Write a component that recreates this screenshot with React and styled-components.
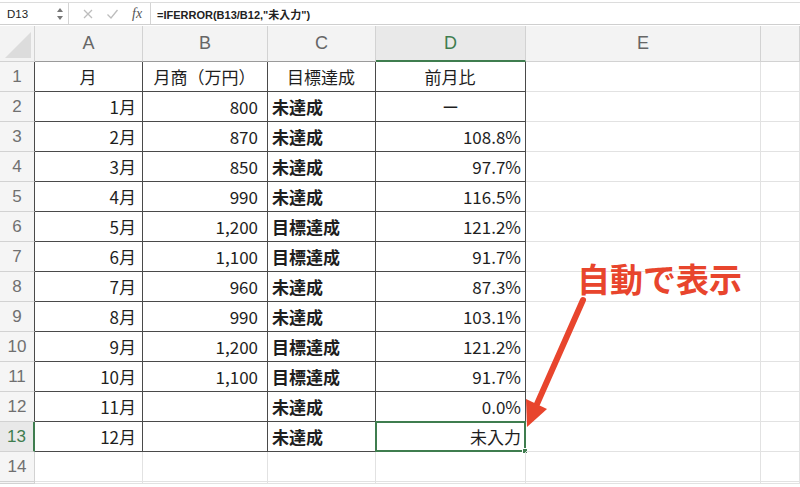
import React from 'react'
import styled, { createGlobalStyle } from 'styled-components'

const GlobalStyle = createGlobalStyle`
  html, body {
    margin: 0;
    padding: 0;
    background: #ffffff;
    overflow: hidden;
  }
  * { box-sizing: border-box; }
`

const green = '#3f7d4f'
const dark = '#4a4a4a'
const light = '#e2e2e2'
const headLine = '#d2d2d2'
const cjk = `"Noto Sans CJK JP", "Noto Sans", sans-serif`

const Page = styled.div`
  position: relative;
  width: 800px;
  height: 487px;
  overflow: hidden;
  font-family: ${cjk};
  color: #1a1a1a;
`

const FormulaBar = styled.div`
  margin-top: 2px;
  height: 23px;
  border-top: 1px solid #dcdcdc;
  border-bottom: 1px solid #cfcfcf;
  display: flex;
  align-items: center;
  background: #fff;
`

const NameBox = styled.div`
  width: 69px;
  height: 100%;
  display: flex;
  align-items: center;
  justify-content: space-between;
  padding: 0 4px 0 7px;
  border-right: 1px solid #d4d4d4;
  font-family: "Liberation Sans", Arial, sans-serif;
  font-size: 11.5px;
  color: #222;
`

const BarIcons = styled.div`
  width: 82px;
  height: 100%;
  display: flex;
  align-items: center;
  gap: 12px;
  padding-left: 13px;
  border-right: 1px solid #d4d4d4;
`

const Fx = styled.span`
  font-family: "Liberation Serif", "Times New Roman", serif;
  font-style: italic;
  font-size: 14px;
  color: #555;
  margin-left: 1px;
`

const FormulaText = styled.div`
  padding-left: 6px;
  font-family: "Liberation Sans", ${cjk};
  font-size: 11px;
  font-weight: 700;
  color: #222;
`

const Sheet = styled.div`
  margin-top: 1px;
  display: grid;
  grid-template-columns: 35px 108px 125px 108px 150px 235px 1fr;
  grid-template-rows: 36px repeat(14, 30px);
`

const ColHead = styled.div`
  background: ${p => (p.$active ? '#e9e9e9' : '#f3f3f3')};
  border-right: 1px solid ${headLine};
  border-bottom: 1px solid ${p => (p.$active ? green : p.$tabled ? '#9a9a9a' : headLine)};
  ${p => p.$active && `border-bottom-width: 2px;`}
  display: flex;
  align-items: center;
  justify-content: center;
  font-family: "Liberation Sans", Arial, sans-serif;
  font-size: 18px;
  color: ${p => (p.$active ? green : '#666')};
`

const Corner = styled(ColHead)`
  position: relative;
  overflow: hidden;
`

const RowHead = styled.div`
  background: ${p => (p.$active ? '#e9e9e9' : '#f5f5f5')};
  border-right: 1px solid ${p => (p.$active ? green : p.$tabled ? dark : headLine)};
  ${p => p.$active && `border-right-width: 2px;`}
  border-bottom: 1px solid ${headLine};
  display: flex;
  align-items: center;
  justify-content: center;
  font-family: "Liberation Sans", Arial, sans-serif;
  font-size: 17px;
  color: ${p => (p.$active ? green : '#707070')};
`

const Cell = styled.div`
  position: relative;
  border-right: 1px solid ${p => (p.$tabled ? dark : light)};
  border-bottom: 1px solid ${p => (p.$tabled ? dark : light)};
  display: flex;
  align-items: center;
  justify-content: ${p => p.$align || 'flex-end'};
  padding: 0 ${p => p.$pad ?? 5}px 1px 4px;
  font-size: 17px;
  font-weight: ${p => (p.$bold ? 700 : 400)};
  color: #1e1e1e;
  white-space: nowrap;
`

const Selection = styled.div`
  position: absolute;
  left: -1px;
  top: -1px;
  right: -1px;
  bottom: -1px;
  border: 2px solid ${green};
  pointer-events: none;
`

const FillHandle = styled.div`
  position: absolute;
  right: -4px;
  bottom: -4px;
  width: 6px;
  height: 6px;
  background: ${green};
  border: 1px solid #fff;
`

const Callout = styled.div`
  position: absolute;
  left: 577px;
  top: 254px;
  font-size: 33px;
  font-weight: 700;
  color: #e8452d;
  white-space: nowrap;
`

const ArrowLayer = styled.svg`
  position: absolute;
  left: 0;
  top: 0;
  pointer-events: none;
`

const data = [
  ['1月', '800', '未達成', 'ー'],
  ['2月', '870', '未達成', '108.8%'],
  ['3月', '850', '未達成', '97.7%'],
  ['4月', '990', '未達成', '116.5%'],
  ['5月', '1,200', '目標達成', '121.2%'],
  ['6月', '1,100', '目標達成', '91.7%'],
  ['7月', '960', '未達成', '87.3%'],
  ['8月', '990', '未達成', '103.1%'],
  ['9月', '1,200', '目標達成', '121.2%'],
  ['10月', '1,100', '目標達成', '91.7%'],
  ['11月', '', '未達成', '0.0%'],
  ['12月', '', '未達成', '未入力'],
]

const Spinner = () => (
  <svg width="8" height="14" viewBox="0 0 8 14">
    <path d="M4 1 L7 5 L1 5 Z" fill="#777" />
    <path d="M4 13 L7 9 L1 9 Z" fill="#777" />
  </svg>
)

const Cross = () => (
  <svg width="12" height="12" viewBox="0 0 12 12">
    <path d="M2 2 L10 10 M10 2 L2 10" stroke="#bdbdbd" strokeWidth="1.3" />
  </svg>
)

const Check = () => (
  <svg width="13" height="12" viewBox="0 0 13 12">
    <path d="M1.5 6.5 L5 10 L11.5 2" stroke="#bdbdbd" strokeWidth="1.3" fill="none" />
  </svg>
)

const App = () => {
  const cols = ['A', 'B', 'C', 'D', 'E', '']

  return (
    <Page>
      <GlobalStyle />
      <FormulaBar>
        <NameBox>
          <span>D13</span>
          <Spinner />
        </NameBox>
        <BarIcons>
          <Cross />
          <Check />
          <Fx>fx</Fx>
        </BarIcons>
        <FormulaText>=IFERROR(B13/B12,"未入力")</FormulaText>
      </FormulaBar>

      <Sheet>
        <Corner>
          <svg width="26" height="26" viewBox="0 0 26 26" style={{ position: 'absolute', right: 3, bottom: 3 }}>
            <path d="M26 0 L26 26 L0 26 Z" fill="#dcdcdc" />
          </svg>
        </Corner>
        {cols.map((c, i) => (
          <ColHead key={'h' + i} $active={c === 'D'} $tabled={i < 4}>{c}</ColHead>
        ))}

        <RowHead $tabled>1</RowHead>
        <Cell $tabled $align="center">月</Cell>
        <Cell $tabled $align="center">月商（万円）</Cell>
        <Cell $tabled $align="center">目標達成</Cell>
        <Cell $tabled $align="center">前月比</Cell>
        <Cell />
        <Cell />

        {data.map((r, i) => {
          const rowNo = i + 2
          const selected = rowNo === 13
          return (
            <React.Fragment key={rowNo}>
              <RowHead $tabled $active={selected}>{rowNo}</RowHead>
              <Cell $tabled $pad={6}>{r[0]}</Cell>
              <Cell $tabled $pad={9}>{r[1]}</Cell>
              <Cell $tabled $bold $align="flex-start">{r[2]}</Cell>
              <Cell $tabled $pad={4} $align={r[3] === 'ー' ? 'center' : 'flex-end'}>
                {r[3]}
                {selected && (
                  <Selection>
                    <FillHandle />
                  </Selection>
                )}
              </Cell>
              <Cell />
              <Cell />
            </React.Fragment>
          )
        })}

        <RowHead>14</RowHead>
        {cols.map((c, i) => <Cell key={'r14' + i} />)}
        <RowHead />
        {cols.map((c, i) => <Cell key={'r15' + i} />)}
      </Sheet>

      <Callout>自動で表示</Callout>
      <ArrowLayer width="800" height="487" viewBox="0 0 800 487">
        <line x1="583" y1="300" x2="537" y2="404" stroke="#e8452d" strokeWidth="6" strokeLinecap="round" />
        <polygon points="527,427 547,409 526,399" fill="#e8452d" />
      </ArrowLayer>
    </Page>
  )
}

export default App
